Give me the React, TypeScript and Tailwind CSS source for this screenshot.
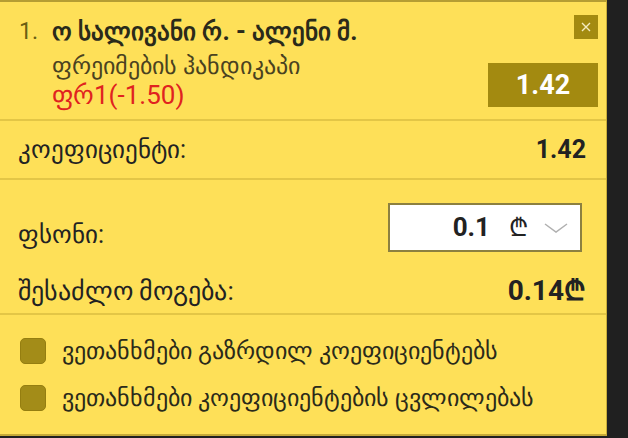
import React from "react";

const F = { fontFamily: 'Roboto, sans-serif' };

export default function App() {
  return (
    <div className="w-[628px] h-[438px] bg-[#202020] flex overflow-hidden" style={F}>
      <div className="w-[607px] h-[436px] bg-[#fee058] border-t-2 border-t-[#b59d33] border-r border-r-[#c9ad3a] border-b-2 border-b-[#c6aa38] flex flex-col">
        {/* header */}
        <div className="h-[119px] shrink-0 flex border-b-2 border-b-[#e3c646] pl-[19px] pr-[8px]">
          <div className="flex-1 flex flex-col">
            <div className="flex items-center mt-[15px] h-[30px]">
              <span className="text-[23px] text-[#6b5e12] w-[33px]">1.</span>
              <span className="text-[25px] font-bold text-[#2a2a1a] leading-[30px]">ო სალივანი რ. - ალენი მ.</span>
            </div>
            <div className="pl-[33px] mt-[6px] text-[23.5px] text-[#4a4220] leading-[26px]">ფრეიმების ჰანდიკაპი</div>
            <div className="pl-[33px] mt-[1px] text-[26px] text-[#e0221f] leading-[30px]">ფრ1(-1.50)</div>
          </div>
          <div className="flex flex-col items-end">
            <div className="mt-[13px] w-[24px] h-[24px] bg-[#a38a10] flex items-center justify-center">
              <svg width="12" height="12" viewBox="0 0 12 12"><path d="M2 2L10 10M10 2L2 10" stroke="#f4eac0" strokeWidth="1.4" /></svg>
            </div>
            <div className="mt-[24px] w-[110px] h-[44px] bg-[#a38a10] flex items-center justify-center text-white text-[27px] font-bold">1.42</div>
          </div>
        </div>
        {/* coefficient */}
        <div className="h-[59px] shrink-0 flex items-center justify-between border-b-2 border-b-[#e3c646] pl-[18px] pr-[20px]">
          <span className="text-[25px] text-[#222] leading-[30px]">კოეფიციენტი:</span>
          <span className="text-[25px] font-bold text-[#222] leading-[30px]">1.42</span>
        </div>
        {/* stake */}
        <div className="h-[135px] shrink-0 flex flex-col border-b-2 border-b-[#e3c646] pl-[18px] pr-[24px]">
          <div className="flex items-center justify-between mt-[23px]">
            <span className="text-[25px] text-[#222] leading-[30px] mt-[14px]">ფსონი:</span>
            <div className="w-[194px] h-[49px] bg-white border-2 border-[#8c8040] flex items-center justify-end pr-[12px]">
              <span className="text-[26px] font-bold text-[#222]">0.1</span>
              <span className="text-[25px] text-[#222] ml-[19px]">₾</span>
              <svg className="ml-[16px]" width="24" height="12" viewBox="0 0 24 12"><path d="M1 2L12 10L23 2" fill="none" stroke="#b0b0b0" strokeWidth="1.5" /></svg>
            </div>
          </div>
          <div className="flex items-center justify-between mt-[24px]">
            <span className="text-[26px] text-[#222] leading-[30px]">შესაძლო მოგება:</span>
            <span className="text-[28px] font-bold text-[#222] leading-[30px] mr-[-4px]">0.14₾</span>
          </div>
        </div>
        {/* checkboxes */}
        <div className="flex-1 flex flex-col pl-[20px] pt-[23px] gap-[21px]">
          <div className="flex items-center h-[26px]">
            <div className="w-[26px] h-[26px] rounded-[5px] bg-[#a38c18] border border-[#957e10]" />
            <span className="ml-[16px] text-[23.5px] leading-[26px] text-[#2a2a1a]">ვეთანხმები გაზრდილ კოეფიციენტებს</span>
          </div>
          <div className="flex items-center h-[26px]">
            <div className="w-[26px] h-[26px] rounded-[5px] bg-[#a38c18] border border-[#957e10]" />
            <span className="ml-[16px] text-[23.5px] leading-[26px] text-[#2a2a1a]">ვეთანხმები კოეფიციენტების ცვლილებას</span>
          </div>
        </div>
      </div>
    </div>
  );
}
